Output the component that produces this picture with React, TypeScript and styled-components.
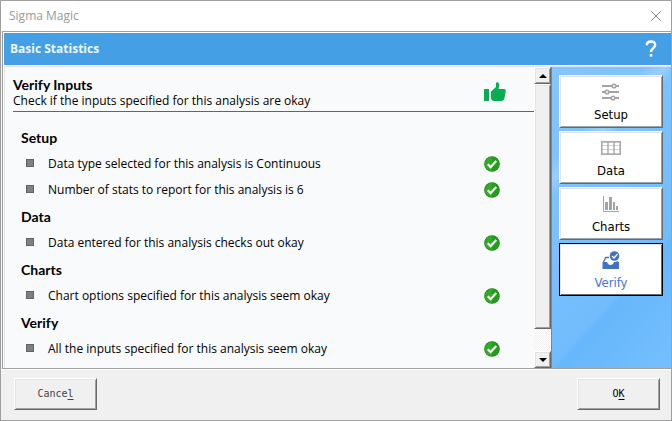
import React from "react";
import styled, { createGlobalStyle, css } from "styled-components";

const GlobalStyle = createGlobalStyle`
  *, *::before, *::after { box-sizing: border-box; }
  body { margin: 0; background: #f0f0f0; }
  button { border-radius: 0; padding: 0; margin: 0; }
`;

const raised = css`
  background: #f0f0f0;
  border: 1px solid;
  border-color: #ffffff #696969 #696969 #ffffff;
  box-shadow: inset 1px 1px 0 #e3e3e3, inset -1px -1px 0 #a0a0a0;
`;

const Dialog = styled.main`
  display: flex;
  flex-direction: column;
  height: 100vh;
  min-height: 400px;
  border: 1px solid #a0a0a0;
  background: #f0f0f0;
  color: #000;
  font-family: "Open Sans", sans-serif;
`;

const TitleBar = styled.header`
  display: flex;
  align-items: center;
  justify-content: space-between;
  flex: none;
  height: 30px;
  padding: 0 9px 0 8px;
  background: #fff;
`;

const WindowTitle = styled.span`
  font-size: 12px;
  line-height: 16px;
  color: #999;
`;

const IconButton = styled.button`
  display: flex;
  border: 0;
  background: none;
  color: inherit;
`;

const Client = styled.section`
  display: flex;
  flex-direction: column;
  flex: 1;
  min-height: 0;
  margin-left: 1px;
  border: solid #a0a0a0;
  border-width: 1px 0 1px 1px;
  background: #fff;
`;

const Banner = styled.div`
  display: flex;
  align-items: center;
  justify-content: space-between;
  flex: none;
  height: 32px;
  margin: 1px 0 1px 1px;
  padding: 0 14px 0 6px;
  background: #449fe4;
  color: #fff;
`;

const BannerTitle = styled.h1`
  margin: 0;
  font-size: 12px;
  line-height: 16px;
  font-weight: 700;
  color: #eef7ff;
`;

const Body = styled.div`
  display: flex;
  flex: 1;
  min-height: 0;
  margin-left: 1px;
  border: solid #e3e3e3;
  border-width: 1px 0 0 1px;
`;

const Report = styled.div`
  flex: 1;
  min-width: 0;
  overflow: hidden;
  padding: 8px 0 0 8px;
  background: #f8fafc;
`;

const Summary = styled.div`
  display: flex;
  align-items: center;
  justify-content: space-between;
  height: 37px;
  padding: 0 28px 3px 0;
  border-bottom: 1px solid #646464;
`;

const SummaryTitle = styled.h2`
  margin: 0;
  font: 700 14px/17px Lato, sans-serif;
`;

const SummaryText = styled.p`
  margin: 0;
  font-size: 12px;
  line-height: 15px;
`;

const Sections = styled.div`
  padding: 12px 34px 0 8px;
`;

const SectionTitle = styled.h3`
  margin: 0;
  font: 700 14px/27px Lato, sans-serif;
`;

const Checks = styled.ul`
  margin: 0;
  padding: 0;
  list-style: none;
`;

const Check = styled.li`
  display: flex;
  align-items: center;
  height: 26px;
  padding-left: 5px;
  font-size: 12px;
  line-height: 16px;
`;

const Bullet = styled.span`
  flex: none;
  width: 8px;
  height: 8px;
  margin: 0 14px 2px 0;
  border: 1px solid #636363;
  background: #808080;
`;

const CheckText = styled.span`
  flex: 1;
`;

const ScrollBar = styled.div`
  display: flex;
  flex-direction: column;
  flex: none;
  width: 17px;
  background: repeating-conic-gradient(#f0f0f0 0 25%, #fff 0 50%) 0 0 / 2px 2px;
`;

const ScrollArrow = styled.button`
  ${raised}
  display: flex;
  align-items: center;
  justify-content: center;
  flex: none;
  height: 17px;
`;

const Thumb = styled.div`
  ${raised}
  flex: 1;
  margin-bottom: 22px;
`;

const Sidebar = styled.nav`
  display: flex;
  flex-direction: column;
  gap: 3px;
  flex: none;
  width: 120px;
  padding: 8px 8px 0 7px;
  border-left: 1px solid #5d8fbb;
  background:
    linear-gradient(135deg, transparent 0 22%, #b4dcff80 27%, transparent 31%),
    linear-gradient(132deg, #84c6fd 0, #72bcfc 69%, #66b7fb 71%, #76bffd 100%);
`;

const StepButton = styled.button<{ $active?: boolean }>`
  display: flex;
  flex-direction: column;
  align-items: center;
  flex: none;
  height: 53px;
  padding-top: 6px;
  background: #fff;
  border: 1px solid;
  border-color: ${(p) => (p.$active ? "#000" : "#fff #696969 #696969 #fff")};
  box-shadow: inset 1px 1px 0 #e3e3e3, inset -1px -1px 0 ${(p) => (p.$active ? "#696969" : "#a0a0a0")};
  color: ${(p) => (p.$active ? "#4472e8" : "#000")};
  font: 13px/16px "DejaVu Sans Condensed", "DejaVu Sans", sans-serif;
`;

const StepLabel = styled.span`
  margin-top: 5px;
`;

const Footer = styled.footer`
  display: flex;
  justify-content: space-between;
  flex: none;
  padding: 8px 11px 10px 13px;
  border-top: 1px solid #fff;
`;

const PushButton = styled.button<{ $muted?: boolean }>`
  ${raised}
  width: 83px;
  height: 32px;
  color: ${(p) => (p.$muted ? "#444" : "#000")};
  font: 10px/14px "DejaVu Sans Mono", monospace;
  text-underline-offset: 2px;
`;

const CloseIcon = () => (
  <svg width="12" height="12" viewBox="0 0 12 12" aria-hidden="true">
    <path d="M1 1l10 10M11 1L1 11" stroke="#888" strokeWidth="1" fill="none" />
  </svg>
);

const HelpIcon = () => (
  <svg width="12" height="18" viewBox="0 0 12 18" aria-hidden="true">
    <path d="M1.800 5.300C1.800 2.800 3.400 1.500 6 1.500s4.200 1.400 4.200 3.600c0 3.100-4.200 3.300-4.200 7" stroke="#fff" strokeWidth="2.400" fill="none" />
    <rect x="4.700" y="14" width="2.600" height="2.600" fill="#fff" />
  </svg>
);

const ThumbsUpIcon = () => (
  <svg width="22" height="20" viewBox="0 0 22 20" role="img" aria-label="Passed">
    <path fill="#07ad50" d="M0 7h5v12H0zM7 9.500L12 5V1.500Q12 0 13.500 .2Q15.500.6 15.300 3L14.500 7H20Q22 7 21.800 9L20.500 16Q20 19 17.500 19H10Q8 18.800 7 17z" />
  </svg>
);

const PassIcon = () => (
  <svg width="16" height="16" viewBox="0 0 16 16" role="img" aria-label="Okay">
    <circle cx="8" cy="8" r="7.800" fill="#16870f" />
    <path d="M8 .8a7.200 7.200 0 0 1 0 14.400z" fill="#269b20" />
    <path d="M8 .8a7.200 7.200 0 0 0 0 14.400z" fill="#32aa28" />
    <path d="M3.800 8.300l2.800 2.900L12.200 5" stroke="#fff" strokeWidth="2.200" fill="none" />
  </svg>
);

const SetupIcon = () => (
  <svg width="20" height="20" viewBox="0 0 20 20" aria-hidden="true">
    <g stroke="#a3a3a3" strokeWidth="2" fill="#fff">
      <path d="M1 4h17M1 10h17M1 16h17" />
      <g strokeWidth="1.500">
        <circle cx="13" cy="4" r="1.800" />
        <circle cx="6" cy="10" r="1.800" />
        <circle cx="12" cy="16" r="1.800" />
      </g>
    </g>
  </svg>
);

const DataIcon = () => (
  <svg width="20" height="20" viewBox="0 0 20 20" aria-hidden="true">
    <path d="M1 7.500h18M1 11.500h18" stroke="#d4d4d4" />
    <path d="M7 4v12M13 4v12" stroke="#a3a3a3" strokeWidth="1.300" />
    <rect x=".8" y="3.800" width="18.400" height="12.400" stroke="#a3a3a3" strokeWidth="1.500" fill="none" />
  </svg>
);

const ChartsIcon = () => (
  <svg width="20" height="20" viewBox="0 0 20 20" aria-hidden="true">
    <path d="M2.500 2v15.500H18" stroke="#a3a3a3" fill="none" />
    <path fill="#a3a3a3" d="M4 8h3v8H4zM8 3h3v13H8zM12 8h2v8h-2zM15 12h2v4h-2z" />
  </svg>
);

const VerifyIcon = () => (
  <svg width="20" height="20" viewBox="0 0 20 20" aria-hidden="true">
    <circle cx="13.500" cy="6" r="4.800" fill="#4271c4" />
    <path d="M11 6l2 2 3.500-4" stroke="#fff" strokeWidth="1.200" fill="none" />
    <path d="M2.500 12l2.300-4.500H8M15.500 11.500l2 1" stroke="#4271c4" strokeWidth="1.300" fill="none" />
    <path d="M1.500 12H6q1 3 3.500 3t3.500-3h5v7H1.500z" fill="#4271c4" />
  </svg>
);

const Arrow = ({ down }: { down?: boolean }) => (
  <svg width="8" height="4" viewBox="0 0 8 4" aria-hidden="true">
    <path d={down ? "M0 0h8L4 4z" : "M0 4h8L4 0z"} fill="#000" />
  </svg>
);

const sections = [
  {
    title: "Setup",
    checks: [
      "Data type selected for this analysis is Continuous",
      "Number of stats to report for this analysis is 6",
    ],
  },
  { title: "Data", checks: ["Data entered for this analysis checks out okay"] },
  { title: "Charts", checks: ["Chart options specified for this analysis seem okay"] },
  { title: "Verify", checks: ["All the inputs specified for this analysis seem okay"] },
];

const steps = [
  { label: "Setup", Icon: SetupIcon },
  { label: "Data", Icon: DataIcon },
  { label: "Charts", Icon: ChartsIcon },
  { label: "Verify", Icon: VerifyIcon },
];

export default function App() {
  const [active, setActive] = React.useState("Verify");
  return (
    <>
      <GlobalStyle />
      <Dialog>
        <TitleBar>
          <WindowTitle>Sigma Magic</WindowTitle>
          <IconButton aria-label="Close"><CloseIcon /></IconButton>
        </TitleBar>
        <Client>
          <Banner>
            <BannerTitle>Basic Statistics</BannerTitle>
            <IconButton aria-label="Help"><HelpIcon /></IconButton>
          </Banner>
          <Body>
            <Report>
              <Summary>
                <div>
                  <SummaryTitle>Verify Inputs</SummaryTitle>
                  <SummaryText>Check if the inputs specified for this analysis are okay</SummaryText>
                </div>
                <ThumbsUpIcon />
              </Summary>
              <Sections>
                {sections.map((section) => (
                  <section key={section.title}>
                    <SectionTitle>{section.title}</SectionTitle>
                    <Checks>
                      {section.checks.map((text) => (
                        <Check key={text}>
                          <Bullet />
                          <CheckText>{text}</CheckText>
                          <PassIcon />
                        </Check>
                      ))}
                    </Checks>
                  </section>
                ))}
              </Sections>
            </Report>
            <ScrollBar>
              <ScrollArrow aria-label="Scroll up"><Arrow /></ScrollArrow>
              <Thumb />
              <ScrollArrow aria-label="Scroll down"><Arrow down /></ScrollArrow>
            </ScrollBar>
            <Sidebar>
              {steps.map(({ label, Icon }) => (
                <StepButton key={label} $active={label === active} onClick={() => setActive(label)}>
                  <Icon />
                  <StepLabel>{label}</StepLabel>
                </StepButton>
              ))}
            </Sidebar>
          </Body>
        </Client>
        <Footer>
          <PushButton $muted>Cance<u>l</u></PushButton>
          <PushButton>O<u>K</u></PushButton>
        </Footer>
      </Dialog>
    </>
  );
}
